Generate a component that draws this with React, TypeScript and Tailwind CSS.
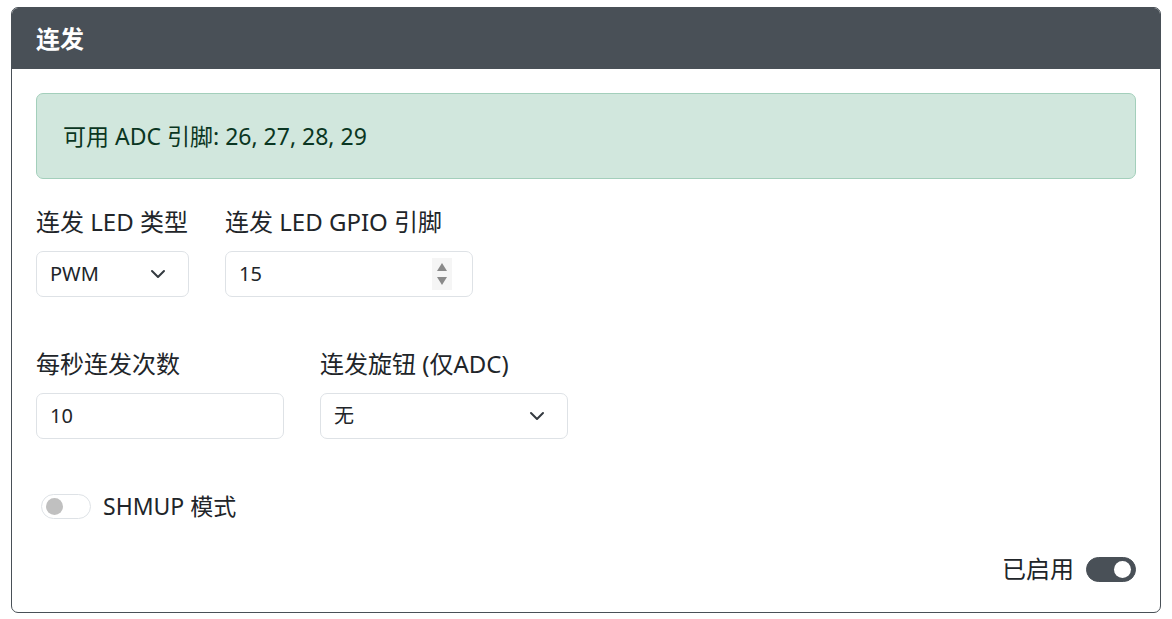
import React, { useState } from 'react';

const font = { fontFamily: '"Noto Sans", "Noto Sans CJK SC", sans-serif' };

function Chevron() {
    return (
        <svg width="16" height="16" viewBox="0 0 16 16" fill="none">
            <path d="M2 5l6 6 6-6" stroke="#343a40" strokeWidth="2" strokeLinecap="round" strokeLinejoin="round" />
        </svg>
    );
}

function Spinner() {
    return (
        <div className="flex flex-col items-center justify-center gap-[6px] w-[20px] h-[32px] bg-[#f5f5f5]">
            <svg width="10" height="8" viewBox="0 0 10 8">
                <path d="M5 0L10 8H0z" fill="#8a8a8a" />
            </svg>
            <svg width="10" height="8" viewBox="0 0 10 8">
                <path d="M0 0h10L5 8z" fill="#8a8a8a" />
            </svg>
        </div>
    );
}

function Toggle({ on }: { on: boolean }) {
    return on ? (
        <div className="w-[50px] h-[25px] rounded-full bg-[#495057] border border-[#495057] flex items-center justify-end pr-[4px]">
            <div className="w-[17px] h-[17px] rounded-full bg-white" />
        </div>
    ) : (
        <div className="w-[50px] h-[25px] rounded-full bg-white border border-[#dee2e6] flex items-center pl-[4px]">
            <div className="w-[17px] h-[17px] rounded-full bg-[#c0c0c0]" />
        </div>
    );
}

export default function App() {
    const [shmup] = useState(false);
    const [enabled] = useState(true);

    return (
        <div className="w-[1172px] h-[619px] bg-white pt-[7px] px-[11px]" style={font}>
            <div className="w-[1150px] h-[606px] border border-[#495057] rounded-[7px] overflow-hidden flex flex-col">
                <div className="h-[61px] bg-[#495057] px-6 flex items-center">
                    <h2 className="text-[24px] font-bold text-white leading-none">连发</h2>
                </div>

                <div className="flex flex-col px-6 pt-6 text-[#212529]">
                    <div className="h-[86px] rounded-[7px] bg-[#d1e7dd] border border-[#a3cfbb] text-[#0a3622] px-[26px] flex items-center text-[23px]">
                        可用 ADC 引脚: 26, 27, 28, 29
                    </div>

                    <div className="flex gap-9 mt-[28px]">
                        <div className="flex flex-col">
                            <label className="h-[30px] leading-[30px] text-[24px] whitespace-nowrap">连发 LED 类型</label>
                            <div className="mt-[14px] w-[153px] h-[46px] border border-[#dee2e6] rounded-[7px] flex items-center justify-between pl-[13px] pr-[22px] text-[20px]">
                                <span>PWM</span>
                                <Chevron />
                            </div>
                        </div>
                        <div className="flex flex-col">
                            <label className="h-[30px] leading-[30px] text-[24px] whitespace-nowrap">连发 LED GPIO 引脚</label>
                            <div className="mt-[14px] w-[248px] h-[46px] border border-[#dee2e6] rounded-[7px] flex items-center justify-between pl-[13px] pr-[20px] text-[20px]">
                                <span>15</span>
                                <Spinner />
                            </div>
                        </div>
                    </div>

                    <div className="flex gap-9 mt-[52px]">
                        <div className="flex flex-col">
                            <label className="h-[30px] leading-[30px] text-[24px] whitespace-nowrap">每秒连发次数</label>
                            <div className="mt-[14px] w-[248px] h-[46px] border border-[#dee2e6] rounded-[7px] flex items-center pl-[13px] text-[20px]">
                                <span>10</span>
                            </div>
                        </div>
                        <div className="flex flex-col">
                            <label className="h-[30px] leading-[30px] text-[24px] whitespace-nowrap">连发旋钮 (仅ADC)</label>
                            <div className="mt-[14px] w-[248px] h-[46px] border border-[#dee2e6] rounded-[7px] flex items-center justify-between pl-[13px] pr-[22px] text-[20px]">
                                <span>无</span>
                                <Chevron />
                            </div>
                        </div>
                    </div>

                    <div className="flex items-center gap-[12px] mt-[52px] ml-[5px] h-[30px]">
                        <Toggle on={shmup} />
                        <span className="text-[23px]">SHMUP 模式</span>
                    </div>

                    <div className="flex items-center justify-end gap-[12px] mt-[33px] h-[30px]">
                        <span className="text-[24px]">已启用</span>
                        <Toggle on={enabled} />
                    </div>
                </div>
            </div>
        </div>
    );
}
